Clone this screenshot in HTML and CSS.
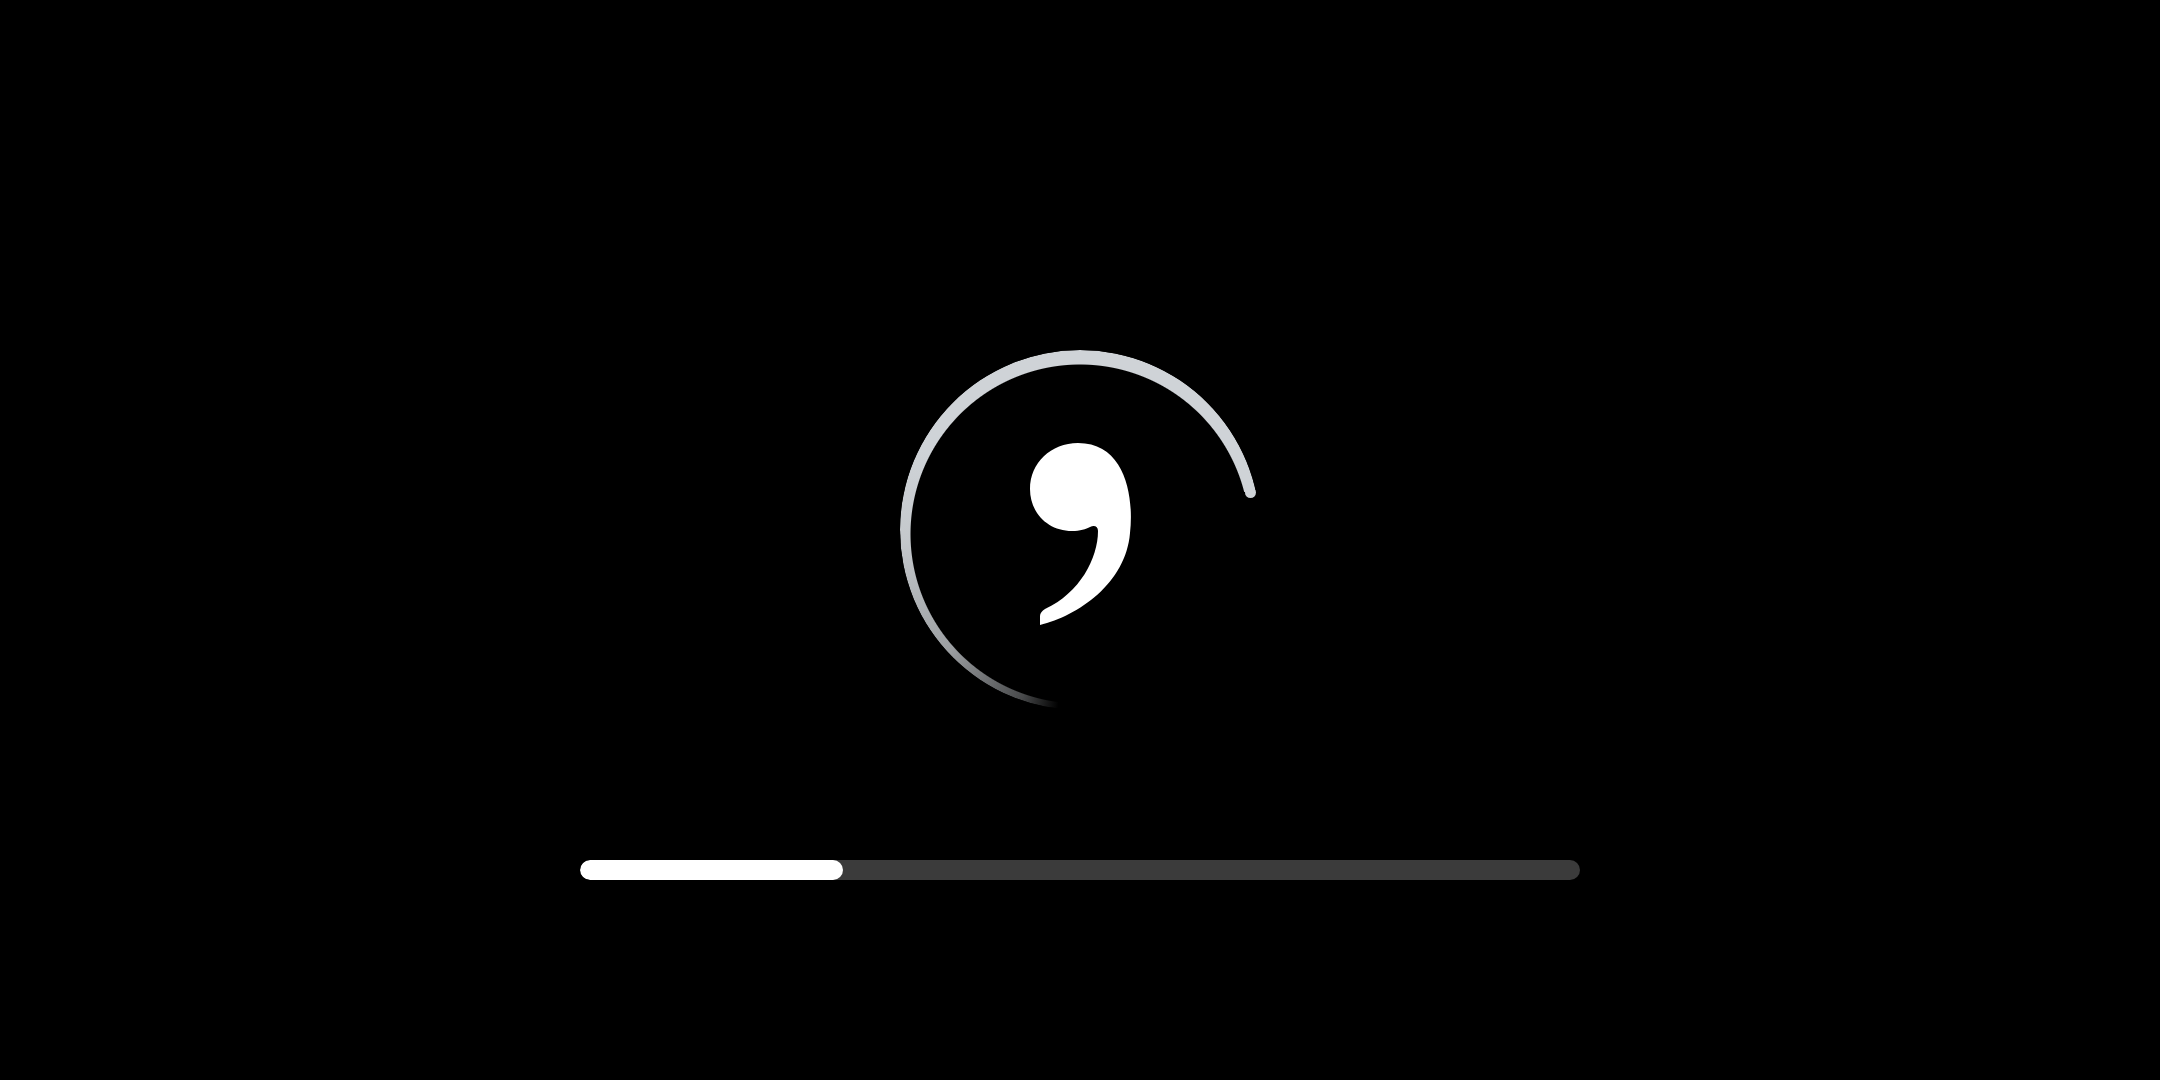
FILE: index.html
```html
<!DOCTYPE html>
<html lang="en">
<head>
<meta charset="utf-8">
<title>Loading</title>
<link rel="stylesheet" href="styles.css">
</head>
<body>
<main class="screen">
  <div class="spinner">
    <div class="ring"></div>
    <div class="cap"></div>
    <svg class="logo" width="104" height="182" viewBox="0 0 104 182" aria-hidden="true">
      <path fill="#ffffff" d="M48 0 C21 0 0 20 0 46 C0 70 18 88 42 88 C50 88 56 86 60 84 C64 82 68 83 68 88 C68 115 50 150 15 166 C12 168 10 170 10 173 L10 182 C48 173 96 140 100 90 C104 55 96 0 48 0 Z"/>
    </svg>
  </div>
  <div class="progress">
    <div class="progress-fill" style="width: 263px"></div>
  </div>
</main>
</body>
</html>
```

FILE: styles.css
```css
html, body {
  margin: 0;
  padding: 0;
  background: #000000;
  height: 100%;
}

.screen {
  width: 2160px;
  height: 1080px;
  display: flex;
  flex-direction: column;
  align-items: center;
  padding-top: 350px;
  box-sizing: border-box;
  gap: 150px;
  font-family: "Liberation Sans", Arial, sans-serif;
}

.spinner {
  position: relative;
  width: 360px;
  height: 360px;
  display: flex;
  align-items: center;
  justify-content: center;
}

.ring {
  position: absolute;
  inset: 0;
  border-radius: 50%;
  background: conic-gradient(from 187deg,
    rgba(207, 211, 215, 0) 0deg,
    rgba(207, 211, 215, 0.35) 12deg,
    rgba(207, 211, 215, 0.75) 40deg,
    rgba(207, 211, 215, 0.95) 80deg,
    #cfd3d7 110deg,
    #cfd3d7 250deg,
    rgba(207, 211, 215, 0) 250deg);
  -webkit-mask-image: radial-gradient(circle 170px at 180px 184px, transparent 99.4%, #000 100%);
  mask-image: radial-gradient(circle 170px at 180px 184px, transparent 99.4%, #000 100%);
}

.cap {
  position: absolute;
  left: 345px;
  top: 137px;
  width: 11px;
  height: 11px;
  border-radius: 50%;
  background: #cfd3d7;
}

.logo {
  display: block;
  margin-top: 8px;
  margin-left: 4px;
  overflow: visible;
}

.progress {
  width: 1000px;
  height: 20px;
  border-radius: 10px;
  background: #3b3b3b;
  overflow: hidden;
  display: flex;
}

.progress-fill {
  height: 100%;
  border-radius: 10px;
  background: #ffffff;
}
```
